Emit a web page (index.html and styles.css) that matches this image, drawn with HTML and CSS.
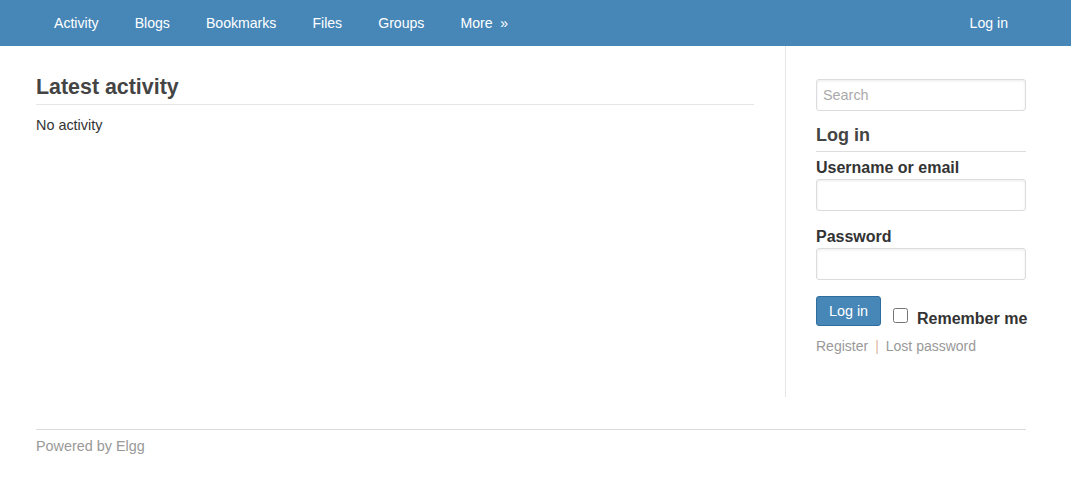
FILE: index.html
```html
<!DOCTYPE html>
<html lang="en">

<head>
    <meta charset="UTF-8">
    <meta name="viewport" content="width=device-width, initial-scale=1.0">
    <title>Elgg</title>
    <link rel="stylesheet" href="styles.css">
</head>

<body>
    <div class="topbar">
        <div class="topbar-inner">
            <ul class="site-menu">
                <li><a href="#">Activity</a></li>
                <li><a href="#">Blogs</a></li>
                <li><a href="#">Bookmarks</a></li>
                <li><a href="#">Files</a></li>
                <li><a href="#">Groups</a></li>
                <li><a href="#">More&nbsp; &raquo;</a></li>
            </ul>
            <a class="topbar-login" href="#">Log in</a>
        </div>
    </div>

    <div class="page">
        <div class="layout">
            <div class="main">
                <h2 class="main-title">Latest activity</h2>
                <p class="empty">No activity</p>
            </div>
            <div class="sidebar">
                <input class="field search" type="text" placeholder="Search">
                <h3 class="module-title">Log in</h3>
                <form class="login-form">
                    <label class="field-label">Username or email</label>
                    <input class="field" type="text">
                    <label class="field-label">Password</label>
                    <input class="field" type="password">
                    <div class="form-footer">
                        <button type="button" class="btn-login">Log in</button>
                        <label class="remember"><input type="checkbox"> Remember me</label>
                    </div>
                    <div class="login-links">
                        <a href="#">Register</a><span class="sep">|</span><a href="#">Lost password</a>
                    </div>
                </form>
            </div>
        </div>
        <div class="footer">
            <a href="#">Powered by Elgg</a>
        </div>
    </div>
</body>

</html>
```

FILE: styles.css
```css
body {
    font-family: "Liberation Sans", Arial, sans-serif;
    font-size: 14.4px;
    margin: 0;
    background-color: #fff;
    color: #333;
}

a {
    text-decoration: none;
}

/* Top bar */
.topbar {
    background-color: #4787b8;
    height: 46px;
}

.topbar-inner {
    width: 990px;
    margin-left: 36px;
    display: flex;
    justify-content: space-between;
    align-items: center;
    height: 46px;
}

.site-menu {
    display: flex;
    list-style: none;
    margin: 0;
    padding: 0;
}

.site-menu a,
.topbar-login {
    display: block;
    color: #fff;
    padding: 0 18px;
    line-height: 46px;
    font-size: 14.1px;
}

/* Page layout */
.page {
    width: 990px;
    margin-left: 36px;
}

.layout {
    display: flex;
}

.main {
    width: 718px;
    margin-right: 31px;
    padding-top: 28px;
}

.main-title {
    font-size: 21.4px;
    font-weight: bold;
    color: #444;
    margin: 0;
    line-height: 26px;
    padding-bottom: 4px;
    border-bottom: 1px solid #e6e6e6;
}

.empty {
    margin: 10px 0 0;
    line-height: 20px;
}

.sidebar {
    width: 210px;
    border-left: 1px solid #e6e6e6;
    padding: 33px 0 41px 30px;
}

.field {
    display: block;
    box-sizing: border-box;
    width: 210px;
    height: 32px;
    border: 1px solid #dcdcdc;
    border-radius: 3px;
    padding: 4px 6px;
    font-family: inherit;
    font-size: 14.4px;
    box-shadow: inset 0 1px 3px rgba(0, 0, 0, 0.08);
    margin: 0;
}

.search::placeholder {
    color: #aaa;
}

.module-title {
    font-size: 18px;
    font-weight: bold;
    color: #444;
    margin: 12px 0 0;
    line-height: 24px;
    padding-bottom: 4px;
    border-bottom: 1px solid #dcdcdc;
}

.field-label {
    display: block;
    font-size: 16px;
    font-weight: bold;
    color: #333;
    margin-top: 6px;
    line-height: 20px;
    margin-bottom: 1px;
}

.field-label + .field + .field-label {
    margin-top: 16px;
}

.form-footer {
    display: flex;
    align-items: flex-start;
    margin-top: 16px;
}

.btn-login {
    flex-shrink: 0;
    width: 65px;
    height: 30px;
    background-color: #4787b8;
    color: #fff;
    border: 1px solid #2f6d9e;
    border-radius: 3px;
    font-family: inherit;
    font-size: 14.4px;
    padding: 0;
}

.remember {
    display: flex;
    align-items: center;
    font-size: 16px;
    font-weight: bold;
    margin-left: 12px;
    padding-top: 14px;
    line-height: 18px;
    white-space: nowrap;
}

.remember input {
    flex-shrink: 0;
    width: 15px;
    height: 15px;
    margin: -8px 9px 0 0;
}

.login-links {
    margin-top: 8px;
    line-height: 20px;
    font-size: 14px;
}

.login-links a {
    color: #999;
}

.sep {
    color: #e0b7a0;
    margin: 0 7px;
}

.footer {
    border-top: 1px solid #dcdcdc;
    margin-top: 32px;
    padding-top: 6px;
    line-height: 20px;
}

.footer a {
    color: #999;
}
```
